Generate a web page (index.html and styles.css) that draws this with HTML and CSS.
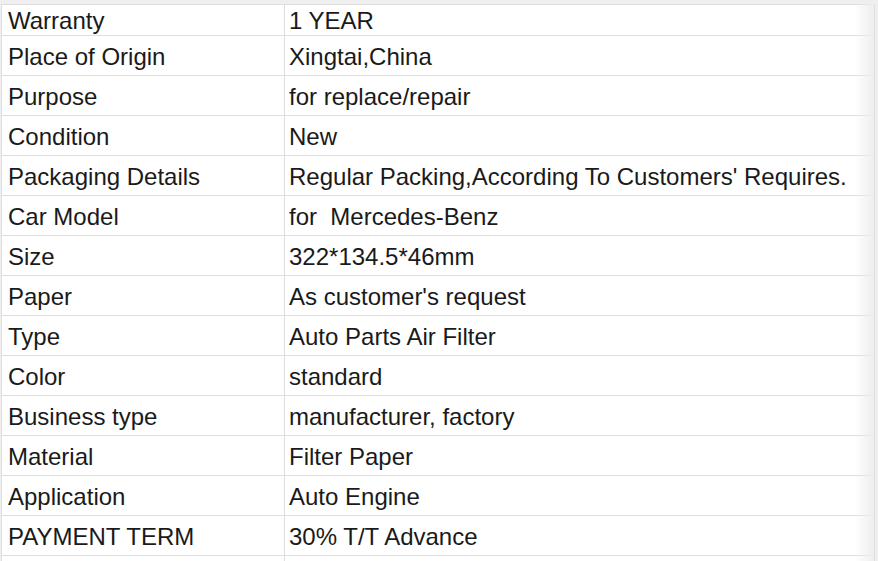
FILE: index.html
```html
<!DOCTYPE html>
<html lang="en">
<head>
    <meta charset="UTF-8">
    <title>Product Attributes</title>
    <link rel="stylesheet" href="styles.css">
</head>
<body>

    <!-- Attribute sheet -->
    <div class="sheet">
        <table class="attrs">
            <colgroup>
                <col class="col-name">
                <col class="col-value">
            </colgroup>
            <tr class="first"><td>Warranty</td><td>1 YEAR</td></tr>
            <tr><td>Place of Origin</td><td>Xingtai,China</td></tr>
            <tr><td>Purpose</td><td>for replace/repair</td></tr>
            <tr><td>Condition</td><td>New</td></tr>
            <tr><td>Packaging Details</td><td>Regular Packing,According To Customers' Requires.</td></tr>
            <tr><td>Car Model</td><td>for&nbsp; Mercedes-Benz</td></tr>
            <tr><td>Size</td><td>322*134.5*46mm</td></tr>
            <tr><td>Paper</td><td>As customer's request</td></tr>
            <tr><td>Type</td><td>Auto Parts Air Filter</td></tr>
            <tr><td>Color</td><td>standard</td></tr>
            <tr><td>Business type</td><td>manufacturer, factory</td></tr>
            <tr><td>Material</td><td>Filter Paper</td></tr>
            <tr><td>Application</td><td>Auto Engine</td></tr>
            <tr><td>PAYMENT TERM</td><td>30% T/T Advance</td></tr>
            <tr class="tail"><td></td><td></td></tr>
        </table>
        <div class="fade"></div>
    </div>

</body>
</html>
```

FILE: styles.css
```css
html, body {
    margin: 0;
    height: 100%;
    overflow: hidden;
}

body {
    background-color: #efefef;
    font-family: "Liberation Sans", Arial, sans-serif;
    padding: 4px 0 0 1px;
    box-sizing: border-box;
}

.sheet {
    position: relative;
    width: 874px;
    background-color: #ffffff;
}

.attrs {
    border-collapse: collapse;
    table-layout: fixed;
    width: 874px;
}

.attrs .col-name {
    width: 283px;
}

.attrs td {
    border: 1px solid #dedede;
    height: 40px;
    padding: 7px 0 0 6px;
    box-sizing: border-box;
    vertical-align: top;
    font-size: 24px;
    line-height: 28px;
    color: #1a1a1a;
    white-space: nowrap;
}

.attrs td + td {
    padding-left: 4px;
}

.attrs tr.first td {
    height: 31px;
    padding-top: 2px;
    line-height: 27px;
}

.attrs tr.tail td {
    height: 6px;
    padding: 0;
    border-bottom: none;
}

.fade {
    position: absolute;
    top: 0;
    right: 1px;
    bottom: 0;
    width: 20px;
    background: linear-gradient(to right, rgba(240, 240, 240, 0), rgba(236, 236, 236, 0.9));
    pointer-events: none;
}
```
